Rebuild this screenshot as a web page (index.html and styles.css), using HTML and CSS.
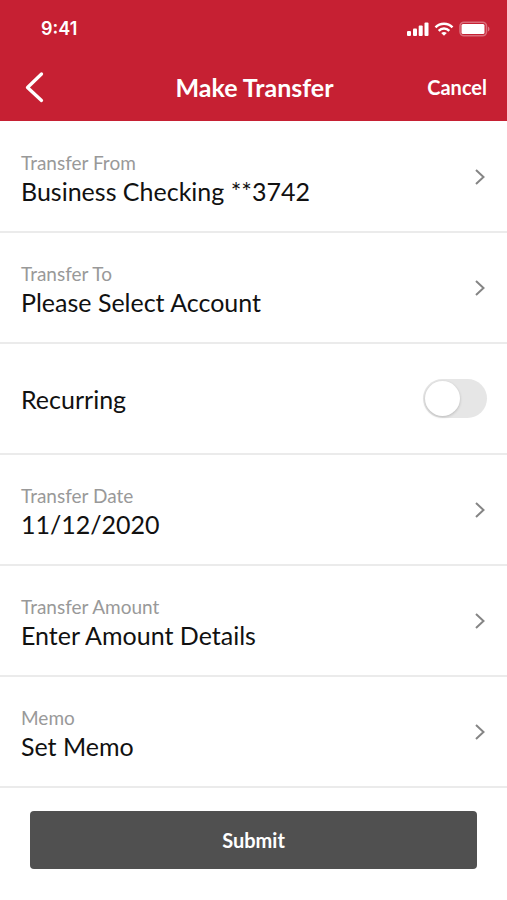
FILE: index.html
```html
<!DOCTYPE html>
<html lang="en">
<head>
  <meta charset="utf-8">
  <meta name="viewport" content="width=device-width, initial-scale=1">
  <title>Make Transfer</title>
  <link rel="stylesheet" href="styles.css">
</head>
<body>
  <header class="header">
    <div class="status">
      <span class="time">9:41</span>
      <div class="indicators">
        <svg width="22" height="14" viewBox="0 0 22 14" fill="#fff" aria-hidden="true">
          <rect x="0" y="9" width="4" height="5" rx="1"/>
          <rect x="6" y="6.5" width="4" height="7.5" rx="1"/>
          <rect x="11.700" y="3.500" width="4" height="10.500" rx="1"/>
          <rect x="17.500" y="0.500" width="4" height="13.500" rx="1"/>
        </svg>
        <svg width="20" height="14" viewBox="0 0 20 14" fill="none" stroke="#fff" stroke-width="2.500" aria-hidden="true">
          <path d="M1.500 5.300A12 12 0 0 1 18.500 5.300"/>
          <path d="M4.700 8.800A7.500 7.500 0 0 1 15.300 8.800"/>
          <path d="M7.200 11Q10 8.900 12.800 11L10 13.800Z" fill="#fff" stroke="none"/>
        </svg>
        <svg width="31" height="16" viewBox="0 0 31 16" aria-hidden="true">
          <rect x="1" y="1.200" width="26.500" height="13.600" rx="4" fill="none" stroke="#fff" stroke-opacity=".35" stroke-width="1.600"/>
          <rect x="2.500" y="3" width="23" height="10" rx="1.500" fill="#fff"/>
          <path d="M29 5.500C31 6.500 31 9.500 29 10.500Z" fill="#fff" opacity=".4"/>
        </svg>
      </div>
    </div>
    <nav class="nav">
      <button class="back" type="button" aria-label="Back">
        <svg width="19" height="32" viewBox="0 0 19 32" fill="none" stroke="#fff" stroke-width="3.300" stroke-linecap="round" stroke-linejoin="round" aria-hidden="true"><path d="M16.500 3L2.500 16.500L16.500 29.500"/></svg>
      </button>
      <h1 class="title">Make Transfer</h1>
      <button class="cancel" type="button">Cancel</button>
    </nav>
  </header>
  <form class="form">
    <button class="row" type="button">
      <span class="field"><span class="label">Transfer From</span><span class="value">Business Checking **3742</span></span>
      <svg class="chevron" viewBox="0 0 12 18" aria-hidden="true"><path d="M2 2L9.500 9L2 16"/></svg>
    </button>
    <button class="row" type="button">
      <span class="field"><span class="label">Transfer To</span><span class="value">Please Select Account</span></span>
      <svg class="chevron" viewBox="0 0 12 18" aria-hidden="true"><path d="M2 2L9.500 9L2 16"/></svg>
    </button>
    <div class="row">
      <label class="value" for="recurring">Recurring</label>
      <input class="toggle" id="recurring" type="checkbox" role="switch">
    </div>
    <button class="row" type="button">
      <span class="field"><span class="label">Transfer Date</span><span class="value">11/12/2020</span></span>
      <svg class="chevron" viewBox="0 0 12 18" aria-hidden="true"><path d="M2 2L9.500 9L2 16"/></svg>
    </button>
    <button class="row" type="button">
      <span class="field"><span class="label">Transfer Amount</span><span class="value">Enter Amount Details</span></span>
      <svg class="chevron" viewBox="0 0 12 18" aria-hidden="true"><path d="M2 2L9.500 9L2 16"/></svg>
    </button>
    <button class="row" type="button">
      <span class="field"><span class="label">Memo</span><span class="value">Set Memo</span></span>
      <svg class="chevron" viewBox="0 0 12 18" aria-hidden="true"><path d="M2 2L9.500 9L2 16"/></svg>
    </button>
    <div class="actions"><button class="submit" type="submit">Submit</button></div>
  </form>
</body>
</html>
```
FILE: styles.css
```css
* {
  box-sizing: border-box;
}

body {
  margin: 0;
  background: #fff;
  color: #111;
  font-family: Lato, "Liberation Sans", sans-serif;
}

button {
  padding: 0;
  border: 0;
  background: none;
  color: inherit;
  font: inherit;
}

svg {
  display: block;
}

.header {
  background: #c62033;
  color: #fff;
}

.status {
  display: flex;
  align-items: center;
  justify-content: space-between;
  height: 57px;
  padding: 0 17px 0 41px;
}

.time {
  font: 600 18px/24px Inter, sans-serif;
}

.indicators {
  display: flex;
  align-items: center;
  gap: 5px;
}

.nav {
  display: grid;
  grid-template-columns: 1fr auto 1fr;
  align-items: center;
  height: 64px;
  padding: 0 20px 4px 22px;
}

.back {
  justify-self: start;
  padding-left: 3px;
}

.title {
  margin: 0;
  font-size: 25px;
  font-weight: 700;
  line-height: 32px;
}

.cancel {
  justify-self: end;
  font-size: 20px;
  font-weight: 700;
  line-height: 28px;
}

.form {
  padding-top: 1px;
}

.row {
  display: flex;
  align-items: center;
  justify-content: space-between;
  width: 100%;
  height: 111px;
  padding: 0 20px 0 21px;
  border-bottom: 2px solid #ebebeb;
  text-align: left;
}

.field {
  display: flex;
  flex-direction: column;
  padding-top: 3px;
}

.label {
  color: #999;
  font-size: 19px;
  line-height: 26px;
}

.value {
  font-size: 25px;
  line-height: 30px;
}

.chevron {
  width: 12px;
  height: 18px;
  margin-right: 1px;
  fill: none;
  stroke: #858585;
  stroke-width: 2;
}

.toggle {
  appearance: none;
  display: flex;
  width: 64px;
  height: 39px;
  margin: 0;
  border-radius: 20px;
  background: #e6e6e6;
}

.toggle::before {
  content: "";
  width: 35px;
  height: 35px;
  margin: 2px;
  border-radius: 50%;
  background: #fff;
  box-shadow: 0 1px 3px #0003;
}

.toggle:checked {
  justify-content: flex-end;
  background: #c62033;
}

.actions {
  padding: 23px 30px 30px;
}

.submit {
  width: 100%;
  height: 58px;
  border-radius: 4px;
  background: #505050;
  color: #fff;
  font-size: 20px;
  font-weight: 700;
}
```
